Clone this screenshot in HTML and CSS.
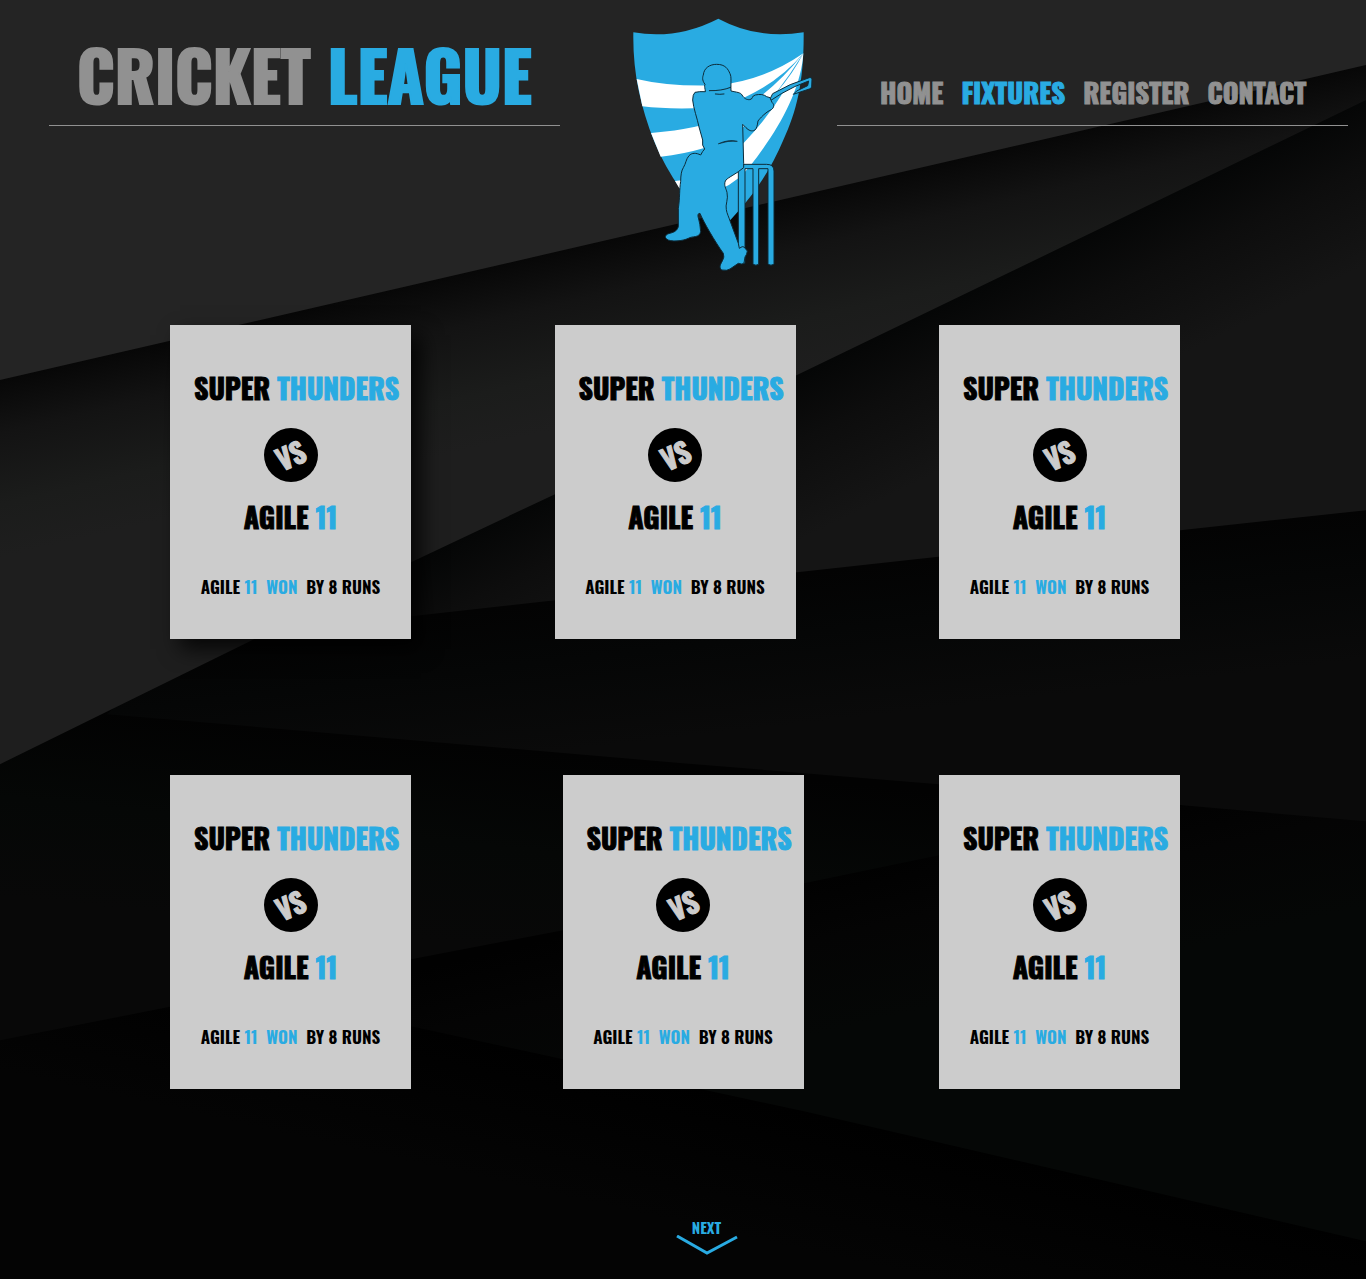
FILE: index.html
```html
<!DOCTYPE html>
<html lang="en">
<head>
<meta charset="utf-8">
<meta name="viewport" content="width=device-width, initial-scale=1">
<title>Cricket League – Fixtures</title>
<link rel="stylesheet" href="styles.css">
</head>
<body>
<svg class="backdrop" viewBox="0 0 1366 1279" preserveAspectRatio="none" aria-hidden="true">
  <defs>
    <linearGradient id="b" gradientUnits="userSpaceOnUse" x1="683" y1="222" x2="722" y2="391">
      <stop offset="0" stop-color="#070707"/><stop offset=".3" stop-color="#131313"/><stop offset=".7" stop-color="#1b1c1b"/><stop offset="1" stop-color="#1e1e1e"/>
    </linearGradient>
    <linearGradient id="c" gradientUnits="userSpaceOnUse" x1="683" y1="431" x2="748" y2="565">
      <stop offset="0" stop-color="#050606"/><stop offset=".4" stop-color="#0d0d0d"/><stop offset="1" stop-color="#151515"/>
    </linearGradient>
    <linearGradient id="d" gradientUnits="userSpaceOnUse" x1="683" y1="586" x2="700" y2="735">
      <stop offset="0" stop-color="#030303"/><stop offset=".4" stop-color="#050606"/><stop offset="1" stop-color="#0a0a0a"/>
    </linearGradient>
    <linearGradient id="e" gradientUnits="userSpaceOnUse" x1="450" y1="742" x2="430" y2="940">
      <stop offset="0" stop-color="#020202"/><stop offset=".5" stop-color="#050706"/><stop offset="1" stop-color="#080808"/>
    </linearGradient>
    <linearGradient id="f" gradientUnits="userSpaceOnUse" x1="800" y1="880" x2="835" y2="1030">
      <stop offset="0" stop-color="#010101"/><stop offset=".4" stop-color="#040404"/><stop offset="1" stop-color="#050706"/>
    </linearGradient>
    <linearGradient id="g" gradientUnits="userSpaceOnUse" x1="700" y1="1086" x2="670" y2="1220">
      <stop offset="0" stop-color="#000"/><stop offset="1" stop-color="#040404"/>
    </linearGradient>
  </defs>
  <rect width="1366" height="1279" fill="url(#g)"/>
  <path fill="url(#f)" d="M225 990 1366 770V1241L804 1111 411 1026Z"/>
  <path fill="url(#e)" d="M0 700H1366V765L939 855 804 883 563 930 411 959 0 1040Z"/>
  <path fill="url(#f)" d="M1100 800 1366 820V900H1100Z"/>
  <path fill="url(#d)" d="M107 714 275 560 1366 480V821L939 784 683 763Z"/>
  <path fill="url(#c)" d="M240 636 500 400 1366 60V510L1180 530 797 572 555 600 411 616Z"/>
  <path fill="url(#b)" d="M0 360 1366 50V100L797 375 555 494 411 562 0 764Z"/>
  <path fill="#242424" d="M0 0H1366V65L0 380Z"/>
</svg>

<div class="page">
  <header class="header">
    <h1 class="brand">CRICKET <span class="accent">LEAGUE</span></h1>
    <svg class="logo" viewBox="36 36 546 766" role="img" aria-label="Cricket League crest">
      <path fill="#29abe2" d="M40 82Q170 105 295 41Q415 105 551 82C552 230 530 320 490 405Q425 560 295 680Q165 560 103 410C60 300 38 200 40 82Z"/>
      <g fill="#fff">
        <path d="M50 222Q150 246 290 241Q430 228 550 145Q480 228 378 275Q300 312 220 310Q130 312 67 304Z"/>
        <path d="M93 384Q240 372 340 330Q460 260 550 145Q510 210 465 268Q360 400 250 430Q190 448 122 455Z"/>
        <path d="M165 528Q280 520 373 412Q490 290 550 145C545 230 500 330 440 415Q390 490 355 520Q270 590 178 550Z"/>
        <path d="M470 262Q520 205 550 145Q525 215 488 262Z"/>
      </g>
      <g stroke="#0c2b39" stroke-width="3" stroke-linejoin="round" stroke-linecap="round">
        <path fill="#29abe2" fill-rule="evenodd" d="M450 282L458 266Q508 236 568 218Q575 216 576 222L575 246Q574 250 568 252L520 268 530 258 563 242 566 228Q525 242 484 266L456 284Z"/>
        <path fill="#29abe2" d="M371 478H440Q462 478 462 498V778Q453 783 444 778V491H416V778Q408 783 399 778V491H375V775H355V500Z"/>
        <path fill="#29abe2" d="M255 252C254 246 253 240 255 238C245 225 248 215 250 210C252 188 270 178 290 178C316 178 324 192 330 206C335 216 332 230 333 258C350 262 362 262 366 270C374 282 380 284 388 284C400 284 394 272 406 270C420 267 432 268 440 275L450 278 456 292C464 300 462 308 454 314C436 322 420 340 414 348C412 362 410 370 405 375C395 381 386 376 378 368L368 358 371 475V488L355 500C338 512 320 520 316 528C311 542 318 550 321 562C326 582 315 600 319 614C320 624 328 640 331 650L355 715 358 730Q368 722 372 726L382 738Q381 748 375 756L372 774Q368 780 355 775L330 792Q322 798 305 795C297 788 300 780 306 770Q315 755 310 745C285 710 250 650 240 625Q230 625 236 642Q240 655 242 680C238 700 218 692 205 700C190 708 150 712 140 702C132 696 138 688 146 686C160 682 170 680 175 665L175 610C180 580 178 550 182 530Q182 500 190 488C198 475 198 462 207 452C216 443 228 443 242 450Q248 438 254 432Q245 422 248 405L237 366C232 340 220 310 218 285Q218 268 225 262Q238 259 255 260Z"/>
        <path fill="none" d="M268 257Q305 258 332 247M286 267Q300 269 312 267"/>
        <path fill="#0c2b39" stroke-width="2" d="M296 416Q325 402 352 409Q325 406 296 416Z"/>
      </g>
    </svg>
    <nav class="nav" aria-label="Main">
      <a href="#home">HOME</a>
      <a href="#fixtures" class="accent" aria-current="page">FIXTURES</a>
      <a href="#register">REGISTER</a>
      <a href="#contact">CONTACT</a>
    </nav>
  </header>

  <main class="fixtures">
    <section class="row">
      <article class="card card--raised">
        <h2 class="team team--home">SUPER <span class="accent">THUNDERS</span></h2>
        <div class="versus"><span class="versus-text">VS</span></div>
        <h2 class="team">AGILE <span class="accent">11</span></h2>
        <p class="result">AGILE <span class="accent">11 &nbsp;WON</span> &nbsp;BY 8 RUNS</p>
      </article>
      <article class="card">
        <h2 class="team team--home">SUPER <span class="accent">THUNDERS</span></h2>
        <div class="versus"><span class="versus-text">VS</span></div>
        <h2 class="team">AGILE <span class="accent">11</span></h2>
        <p class="result">AGILE <span class="accent">11 &nbsp;WON</span> &nbsp;BY 8 RUNS</p>
      </article>
      <article class="card">
        <h2 class="team team--home">SUPER <span class="accent">THUNDERS</span></h2>
        <div class="versus"><span class="versus-text">VS</span></div>
        <h2 class="team">AGILE <span class="accent">11</span></h2>
        <p class="result">AGILE <span class="accent">11 &nbsp;WON</span> &nbsp;BY 8 RUNS</p>
      </article>
    </section>
    <section class="row row--lower">
      <article class="card">
        <h2 class="team team--home">SUPER <span class="accent">THUNDERS</span></h2>
        <div class="versus"><span class="versus-text">VS</span></div>
        <h2 class="team">AGILE <span class="accent">11</span></h2>
        <p class="result">AGILE <span class="accent">11 &nbsp;WON</span> &nbsp;BY 8 RUNS</p>
      </article>
      <article class="card">
        <h2 class="team team--home">SUPER <span class="accent">THUNDERS</span></h2>
        <div class="versus"><span class="versus-text">VS</span></div>
        <h2 class="team">AGILE <span class="accent">11</span></h2>
        <p class="result">AGILE <span class="accent">11 &nbsp;WON</span> &nbsp;BY 8 RUNS</p>
      </article>
      <article class="card">
        <h2 class="team team--home">SUPER <span class="accent">THUNDERS</span></h2>
        <div class="versus"><span class="versus-text">VS</span></div>
        <h2 class="team">AGILE <span class="accent">11</span></h2>
        <p class="result">AGILE <span class="accent">11 &nbsp;WON</span> &nbsp;BY 8 RUNS</p>
      </article>
    </section>
  </main>

  <footer class="footer">
    <a class="next" href="#next">
      NEXT
      <svg class="chevron" viewBox="0 0 62 20" aria-hidden="true"><path d="M1 1 31 18 61 2" fill="none" stroke="#29abe2" stroke-width="3"/></svg>
    </a>
  </footer>
</div>
</body>
</html>
```
FILE: styles.css
```css
* { box-sizing: border-box; }

body {
  margin: 0;
  position: relative;
  background: #040404;
  color: #000;
  font-family: Oswald, "Roboto Condensed", "Open Sans Condensed", "Liberation Sans", sans-serif;
  font-weight: 700;
}

h1, h2, p { margin: 0; font-weight: inherit; white-space: nowrap; }
a { color: inherit; text-decoration: none; }
.accent { color: #29abe2; }

/* faceted dark background behind the whole page */
.backdrop {
  position: absolute;
  inset: 0;
  width: 100%;
  height: 100%;
}

.page { position: relative; }

.header {
  display: grid;
  grid-template-columns: 1fr 277px 1fr;
  align-items: start;
  padding: 0 18px 0 49px;
  color: #919191;
}

.brand {
  padding: 34px 0 11px 28px;
  border-bottom: 1px solid #919191;
  font-size: 67px;
  line-height: 80px;
  -webkit-text-stroke: 2px;
}

.logo {
  width: 182px;
  margin: 17px 0 0 72px;
}

.nav {
  display: flex;
  gap: 18px;
  padding: 77px 0 18px 43px;
  border-bottom: 1px solid #919191;
  font-size: 27px;
  line-height: 30px;
  -webkit-text-stroke: 1px;
}

.fixtures {
  display: grid;
  gap: 136px;
  padding: 53px 186px 0 170px;
}

.row {
  display: grid;
  grid-template-columns: 241px 1fr 241px;
  justify-items: center;
}

.row--lower .card:nth-child(2) { margin-left: 16px; }

.card {
  display: flex;
  flex-direction: column;
  align-items: center;
  width: 241px;
  padding: 43px 0 40px;
  background: #ccc;
}

.card--raised { box-shadow: 10px 10px 20px rgba(0, 0, 0, .8); }

.team {
  font-size: 28px;
  line-height: 40px;
  -webkit-text-stroke: 1px;
}

.team--home { align-self: flex-start; padding-left: 24px; }

.versus {
  display: grid;
  place-items: center;
  width: 54px;
  height: 54px;
  margin: 20px 0 15px;
  border-radius: 50%;
  background: #000;
  color: #ccc;
  font-size: 28px;
  line-height: 30px;
  -webkit-text-stroke: 1px;
}

.versus-text { transform: rotate(-24deg); }

.result {
  margin-top: 38px;
  font-size: 17px;
  line-height: 24px;
}

.footer {
  display: flex;
  justify-content: center;
  padding: 130px 0 24px 47px;
}

.next {
  display: flex;
  flex-direction: column;
  align-items: center;
  color: #29abe2;
  font-size: 15px;
  line-height: 16px;
}

.chevron { width: 62px; height: 20px; }
```
